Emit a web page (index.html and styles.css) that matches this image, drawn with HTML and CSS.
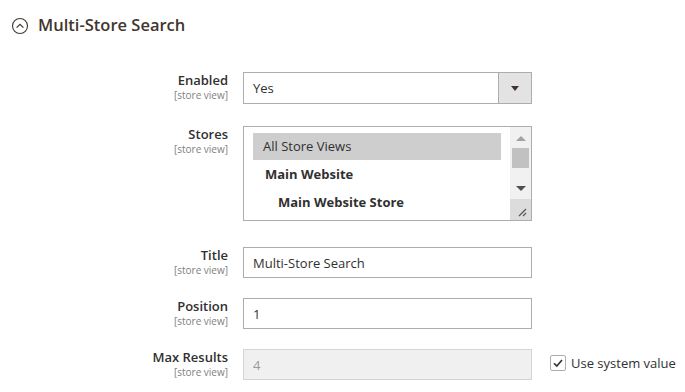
FILE: index.html
```html
<!DOCTYPE html>
<html lang="en">
<head>
  <meta charset="UTF-8">
  <meta name="viewport" content="width=device-width, initial-scale=1.0">
  <title>Multi-Store Search</title>
  <link rel="stylesheet" href="styles.css">
</head>
<body>
  <div class="section">
    <div class="section-title">
      <svg class="toggle" width="18" height="18" viewBox="0 0 18 18">
        <circle cx="9" cy="9" r="7.5" fill="none" stroke="#41362f" stroke-width="1.1"/>
        <path d="M5.6 10.6 L9 7.3 L12.4 10.6" fill="none" stroke="#41362f" stroke-width="1.2"/>
      </svg>
      <span>Multi-Store Search</span>
    </div>

    <div class="fields">
      <div class="row row-select">
        <div class="label">Enabled<span class="scope">[store view]</span></div>
        <div class="select">
          <span class="value">Yes</span>
          <span class="arrow"></span>
        </div>
      </div>

      <div class="row row-multi">
        <div class="label">Stores<span class="scope">[store view]</span></div>
        <div class="multiselect">
          <div class="options">
            <div class="option selected">All Store Views</div>
            <div class="option group">Main Website</div>
            <div class="option group sub">Main Website Store</div>
          </div>
          <div class="scrollbar">
            <span class="up"></span>
            <span class="thumb"></span>
            <span class="down"></span>
            <span class="grip">
              <svg width="20" height="20" viewBox="0 0 20 20">
                <path d="M9 17 L16 10 M13 17 L16 14" stroke="#555" stroke-width="1.2"/>
              </svg>
            </span>
          </div>
        </div>
      </div>

      <div class="row">
        <div class="label">Title<span class="scope">[store view]</span></div>
        <input class="text" type="text" value="Multi-Store Search">
      </div>

      <div class="row">
        <div class="label">Position<span class="scope">[store view]</span></div>
        <input class="text" type="text" value="1">
      </div>

      <div class="row">
        <div class="label">Max Results<span class="scope">[store view]</span></div>
        <input class="text" type="text" value="4" disabled>
        <label class="use-default">
          <span class="check">
            <svg width="14" height="14" viewBox="0 0 14 14">
              <path d="M3 7.2 L5.8 10 L11 4" fill="none" stroke="#303030" stroke-width="1.6"/>
            </svg>
          </span>
          Use system value
        </label>
      </div>
    </div>
  </div>
</body>
</html>
```

FILE: styles.css
```css
body {
  margin: 0;
  font-family: "Open Sans", Arial, sans-serif;
  color: #303030;
  background: #fff;
}
.section {
  padding: 12px 0 0 11px;
}
.section-title {
  display: flex;
  align-items: center;
  gap: 9px;
  font-size: 16.5px;
  font-weight: 600;
  color: #41362f;
  height: 24px;
}
.toggle {
  margin-top: 4px;
}
.fields {
  margin-top: 36px;
}
.row {
  display: grid;
  grid-template-columns: 217px 289px auto;
  column-gap: 15px;
  margin-bottom: 20px;
}
.row-select {
  margin-bottom: 22px;
}
.row-multi {
  margin-bottom: 26px;
}
.label {
  text-align: right;
  font-size: 13px;
  font-weight: 600;
  line-height: 17px;
}
.scope {
  display: block;
  font-size: 10px;
  font-weight: 400;
  color: #808080;
  line-height: 13px;
}
.select {
  height: 32px;
  border: 1px solid #adadad;
  box-sizing: border-box;
  display: flex;
  align-items: center;
  font-size: 13px;
}
.select .value {
  flex: 1;
  padding-left: 9px;
}
.select .arrow {
  width: 32px;
  height: 30px;
  background: #e3e3e3;
  border-left: 1px solid #adadad;
  position: relative;
}
.select .arrow::after {
  content: "";
  position: absolute;
  left: 12px;
  top: 13px;
  border-left: 4px solid transparent;
  border-right: 4px solid transparent;
  border-top: 5px solid #41362f;
}
.multiselect {
  height: 95px;
  border: 1px solid #adadad;
  box-sizing: border-box;
  display: flex;
}
.options {
  flex: 1;
  padding: 6px 9px 0 9px;
}
.option {
  height: 28px;
  line-height: 27px;
  font-size: 13px;
  padding-left: 10px;
}
.option.selected {
  background: #cecece;
  height: 27px;
  margin-bottom: 1px;
}
.option.group {
  font-weight: 700;
  padding-left: 12px;
}
.option.sub {
  padding-left: 25px;
}
.scrollbar {
  width: 21px;
  background: #f1f1f1;
  display: flex;
  flex-direction: column;
  align-items: center;
}
.scrollbar .up {
  margin-top: 9px;
  border-left: 5px solid transparent;
  border-right: 5px solid transparent;
  border-bottom: 5px solid #a3a3a3;
}
.scrollbar .thumb {
  margin-top: 7px;
  width: 17px;
  height: 20px;
  background: #c1c1c1;
}
.scrollbar .down {
  margin-top: 18px;
  border-left: 5px solid transparent;
  border-right: 5px solid transparent;
  border-top: 5px solid #505050;
}
.scrollbar .grip {
  margin-top: auto;
  width: 21px;
  height: 21px;
  background: #dcdcdc;
}
.text {
  height: 31px;
  border: 1px solid #adadad;
  box-sizing: border-box;
  margin: 0;
  padding: 0 9px;
  font-family: "Open Sans", Arial, sans-serif;
  font-size: 13px;
  color: #303030;
  outline: none;
}
.text:disabled {
  background: #f0f0f0;
  border-color: #d4d4d4;
  color: #999;
}
.use-default {
  display: flex;
  align-items: center;
  gap: 5px;
  font-size: 13px;
  white-space: nowrap;
  margin-left: 3px;
  height: 31px;
  padding-bottom: 3px;
  box-sizing: border-box;
}
.check {
  width: 14px;
  height: 14px;
  border: 1px solid #adadad;
  border-radius: 2px;
  display: flex;
  align-items: center;
  justify-content: center;
}
```
